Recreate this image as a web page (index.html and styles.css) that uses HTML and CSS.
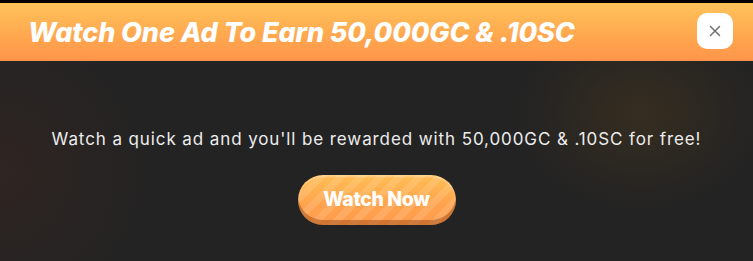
FILE: index.html
```html
<!DOCTYPE html>
<html>
<head>
<meta charset="utf-8">
<link rel="stylesheet" href="styles.css">
</head>
<body>
<div class="modal">
  <header class="modal-header">
    <h1 class="modal-title">Watch One Ad To Earn 50,000GC &amp; .10SC</h1>
    <button class="close-btn" aria-label="Close">
      <svg width="12" height="12" viewBox="0 0 12 12"><path d="M1.5 1.5L10.5 10.5M10.5 1.5L1.5 10.5" stroke="#707070" stroke-width="1.5" stroke-linecap="round"/></svg>
    </button>
  </header>
  <main class="modal-body">
    <p class="modal-text">Watch a quick ad and you'll be rewarded with 50,000GC &amp; .10SC for free!</p>
    <button class="watch-btn">Watch Now</button>
  </main>
</div>
</body>
</html>
```
FILE: styles.css
```css
html, body {
  margin: 0;
  padding: 0;
  background: #000;
}
body {
  width: 753px;
  height: 261px;
  overflow: hidden;
  font-family: "Inter", "Noto Sans", sans-serif;
}
.modal {
  margin-top: 3px;
  height: 258px;
  display: flex;
  flex-direction: column;
  background:
    radial-gradient(ellipse 180px 140px at 640px 110px, rgba(120, 80, 20, 0.22), transparent 70%),
    radial-gradient(ellipse 220px 220px at 0px 170px, rgba(70, 40, 30, 0.35), transparent 70%),
    #232323;
}
.modal-header {
  height: 58px;
  display: flex;
  align-items: center;
  justify-content: space-between;
  padding: 0 20px 0 28px;
  background: linear-gradient(180deg, #ffc35a 0%, #ffa84f 55%, #ff944a 100%);
}
.modal-title {
  margin: 0;
  color: #fff;
  font-size: 27px;
  font-weight: 800;
  font-style: italic;
  letter-spacing: -0.1px;
}
.close-btn {
  width: 36px;
  height: 36px;
  border: none;
  border-radius: 10px;
  background: #fff;
  display: flex;
  align-items: center;
  justify-content: center;
  padding: 0;
  margin-top: -2px;
}
.modal-body {
  flex: 1;
  display: flex;
  flex-direction: column;
  align-items: center;
  padding-top: 68px;
}
.modal-text {
  margin: 0;
  color: #ececec;
  font-size: 17px;
  font-weight: 400;
  letter-spacing: 0.9px;
}
.watch-btn {
  margin-top: 26px;
  width: 158px;
  height: 50px;
  border: none;
  border-radius: 25px;
  color: #fff;
  font-family: inherit;
  font-size: 19.5px;
  font-weight: 800;
  letter-spacing: -0.4px;
  background:
    repeating-linear-gradient(135deg, rgba(255,255,255,0.12) 0 7px, rgba(255,255,255,0) 7px 14px),
    linear-gradient(180deg, #ffbe55 0%, #ffa34d 60%, #ff9a4c 100%);
  box-shadow: inset 0 -5px 0 rgba(150, 70, 20, 0.45), inset 0 2px 2px rgba(255,255,255,0.3);
  padding-bottom: 3px;
}
```
